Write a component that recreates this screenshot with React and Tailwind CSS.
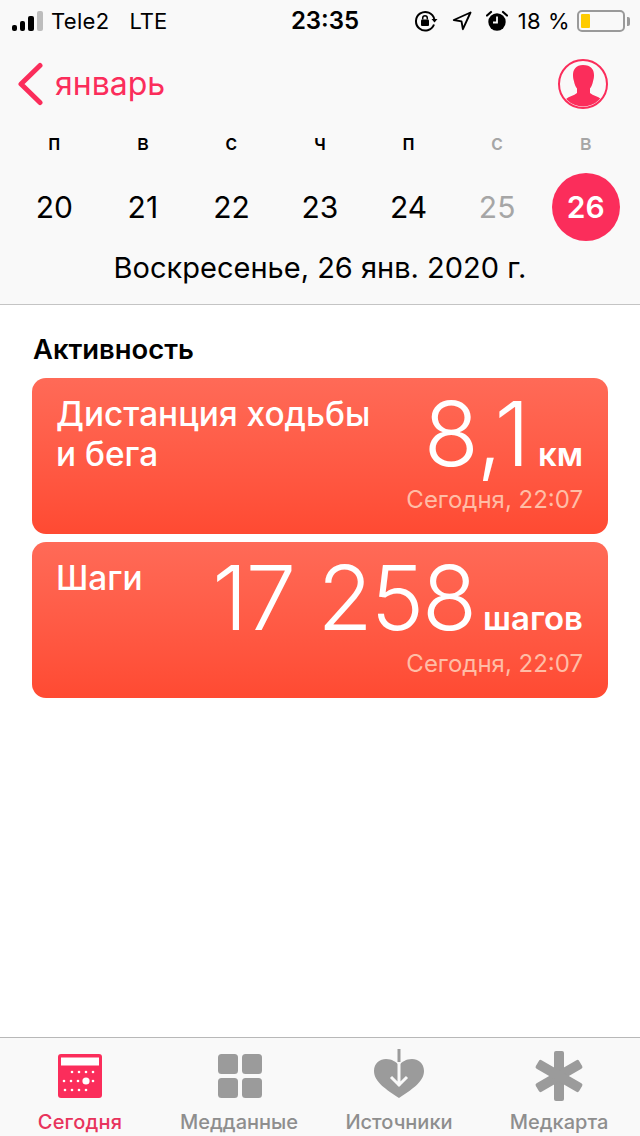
const days = [
  { name: "п", date: "20" },
  { name: "в", date: "21" },
  { name: "с", date: "22" },
  { name: "ч", date: "23" },
  { name: "п", date: "24" },
  { name: "с", date: "25", muted: true },
  { name: "в", date: "26", muted: true, today: true },
]

function StatusBar() {
  return (
    <div className="h-[40px] flex items-center justify-between pl-[12px] pr-[10px] pt-[2px] text-[22px] text-black">
      <div className="w-[230px] flex items-center">
        <div className="flex items-end gap-[3px] mr-[8px]">
          <span className="w-[5px] h-[6px] rounded-[2px] bg-black" />
          <span className="w-[5px] h-[10px] rounded-[2px] bg-black" />
          <span className="w-[6px] h-[15px] rounded-[2px] bg-black" />
          <span className="w-[6px] h-[20px] rounded-[2px] bg-[#bdbdbd]" />
        </div>
        <span className="tracking-[0.3px]">Tele2</span>
        <span className="ml-[20px]">LTE</span>
      </div>
      <div className="text-[24px] font-semibold">23:35</div>
      <div className="w-[222px] flex items-center justify-end">
        <svg width="24" height="22" viewBox="0 0 24 22" className="mr-[14px]">
          <path d="M20 14.500A9.300 9.300 0 1 1 20.300 9" fill="none" stroke="#000" strokeWidth="2" />
          <path d="M17.500 9h6l-3 3.400z" fill="#000" />
          <rect x="7" y="9.500" width="8" height="6.500" rx="1" fill="#000" />
          <path d="M8.700 9.500V8a2.300 2.300 0 0 1 4.600 0v1.500" fill="none" stroke="#000" strokeWidth="1.500" />
        </svg>
        <svg width="20" height="20" viewBox="0 0 20 20" className="mr-[14px]">
          <path d="M18.500 1.500 1.800 9l7.700 1.400 1.400 7.800z" fill="none" stroke="#000" strokeWidth="1.900" strokeLinejoin="round" />
        </svg>
        <svg width="22" height="22" viewBox="0 0 22 22" className="mr-[10px]">
          <circle cx="11" cy="12" r="8.700" fill="#000" />
          <path d="M11 6.500V12.500H7" fill="none" stroke="#fafafa" strokeWidth="1.800" />
          <path d="M1 5.500 5 2M21 5.500 17 2" stroke="#000" strokeWidth="2.200" strokeLinecap="round" />
        </svg>
        <span className="tracking-[0.5px]">18 %</span>
        <div className="ml-[7px] w-[48px] h-[22px] rounded-[5px] border-2 border-[#9a9a9a] p-[2px]">
          <div className="w-[9px] h-full rounded-[1px] bg-[#fecb00]" />
        </div>
        <span className="ml-[2px] w-[3px] h-[9px] rounded-r-[2px] bg-[#9a9a9a]" />
      </div>
    </div>
  )
}

function CalendarHeader() {
  return (
    <div className="bg-[#f9f9f9] border-b border-[#c4c4c4] h-[305px]">
      <StatusBar />
      <div className="h-[85px] flex items-center justify-between pl-[17px] pr-[31px] pt-[3px]">
        <div className="flex items-center text-[#fb2d5b]">
          <svg width="27" height="44" viewBox="0 0 27 44">
            <path d="M23 3.500 4 22l19 18.500" fill="none" stroke="#fb2d5b" strokeWidth="5" strokeLinecap="round" strokeLinejoin="round" />
          </svg>
          <span className="ml-[11px] text-[32px] leading-none">январь</span>
        </div>
        <svg width="52" height="52" viewBox="0 0 52 52">
          <defs>
            <clipPath id="avatar">
              <circle cx="26" cy="26" r="22.500" />
            </clipPath>
          </defs>
          <circle cx="26" cy="26" r="24" fill="none" stroke="#fb2d5b" strokeWidth="2" />
          <path
            clipPath="url(#avatar)"
            d="M26 7c8 0 11 4.500 11 10 0 2.500-.3 4-.9 6-.6 3-1.600 5.500-3.100 7.500V35c3 2.500 8 3.500 11 6l3 12H6l3-12c3-2.500 8-3.500 11-6v-4.500c-1.500-2-2.500-4.500-3.100-7.500-.6-2-.9-3.500-.9-6 0-5.500 3-10 10-10z"
            fill="#fb2d5b"
          />
        </svg>
      </div>
      <div className="grid grid-cols-7 px-[10px] pt-[3px]">
        {days.map((d, i) => (
          <div key={i} className="flex flex-col items-center">
            <span className={`h-[30px] leading-[30px] text-[21px] font-medium ${d.muted ? "text-[#a6a6a6]" : "text-black"}`}>{d.name}</span>
            <div
              className={`mt-[15px] w-[68px] h-[68px] rounded-full flex items-center justify-center text-[30px] ${
                d.today ? "bg-[#fb2d5b] text-white font-semibold" : d.muted ? "text-[#a6a6a6]" : "text-black"
              }`}
            >
              {d.date}
            </div>
          </div>
        ))}
      </div>
      <div className="mt-[10px] text-center text-[29px] leading-[34px] text-black">Воскресенье, 26 янв. 2020 г.</div>
    </div>
  )
}

function MetricCard({ title, value, unit, tight }) {
  return (
    <div className="h-[156px] rounded-[14px] bg-gradient-to-b from-[#ff6a57] to-[#ff4a32] pl-[24px] pr-[25px] flex flex-col text-white">
      <div className="flex justify-between">
        <div className="pt-[16px] text-[33.400px] leading-[40px] font-medium whitespace-nowrap">{title}</div>
        <div className="flex items-baseline h-[108px] pt-[8px]">
          <span className={`text-[90px] leading-[96px] font-light ${tight ? "tracking-[-2px]" : ""}`}>{value}</span>
          <span className="ml-[8px] text-[33px] leading-none font-semibold">{unit}</span>
        </div>
      </div>
      <div className="text-right text-[24px] leading-[28px] text-[#ffbda6]">Сегодня, 22:07</div>
    </div>
  )
}

function TabBar() {
  return (
    <div className="h-[99px] bg-[#f9f9f9] border-t border-[#b8b8b8] grid grid-cols-4 shrink-0">
      <div className="flex flex-col items-center">
        <svg width="46" height="46" viewBox="0 0 46 46" className="mt-[15px]">
          <rect x="1" y="1" width="44" height="44" rx="3" fill="#fb2d5b" />
          <rect x="4" y="4.500" width="38" height="8" fill="#fff" />
          {[15, 22, 29, 36].map((x) => <circle key={x} cx={x} cy={19} r="1.300" fill="#fff" />)}
          {[7, 14, 21, 36].map((x) => <circle key={x} cx={x} cy={28} r="1.300" fill="#fff" />)}
          <circle cx="29" cy="28" r="3.600" fill="#fff" />
          {[8, 15, 22, 29].map((x) => <circle key={x} cx={x} cy={37} r="1.300" fill="#fff" />)}
        </svg>
        <span className="mt-[10px] text-[20px] leading-[26px] font-medium tracking-[0.2px] text-[#e8335c]">Сегодня</span>
      </div>
      <div className="flex flex-col items-center">
        <svg width="46" height="46" viewBox="0 0 46 46" fill="#9b9b9b" className="mt-[15px]">
          <rect x="1" y="1" width="20" height="20" rx="3.500" />
          <rect x="25" y="1" width="20" height="20" rx="3.500" />
          <rect x="1" y="25" width="20" height="20" rx="3.500" />
          <rect x="25" y="25" width="20" height="20" rx="3.500" />
        </svg>
        <span className="mt-[10px] -ml-[2px] text-[20px] leading-[26px] font-medium text-[#8e8e8e]">Медданные</span>
      </div>
      <div className="flex flex-col items-center">
        <svg width="52" height="52" viewBox="0 0 52 52" className="mt-[10px] -ml-[2px]">
          <path d="M26 50C14 42 1 34 1 23 1 15 7 11 13 11c6 0 10 3 13 6 3-3 7-6 13-6 6 0 12 4 12 12 0 11-13 19-25 27z" fill="#9b9b9b" />
          <path d="M26 14v24M18 29l8 8 8-8" fill="none" stroke="#f9f9f9" strokeWidth="3" />
          <path d="M26 1v13" stroke="#9b9b9b" strokeWidth="3" />
        </svg>
        <span className="mt-[9px] -ml-[2px] text-[20px] leading-[26px] font-medium text-[#8e8e8e]">Источники</span>
      </div>
      <div className="flex flex-col items-center">
        <svg width="50" height="50" viewBox="0 0 50 50" fill="#9b9b9b" className="mt-[13px] -ml-[2px]">
          <rect x="20" y="0" width="10" height="50" rx="2" />
          <rect x="20" y="0" width="10" height="50" rx="2" transform="rotate(60 25 25)" />
          <rect x="20" y="0" width="10" height="50" rx="2" transform="rotate(120 25 25)" />
        </svg>
        <span className="mt-[8px] -ml-[2px] text-[20px] leading-[26px] font-medium text-[#8e8e8e]">Медкарта</span>
      </div>
    </div>
  )
}

export default function App() {
  return (
    <div className="w-[640px] h-[1136px] flex flex-col bg-white font-['Inter',sans-serif] overflow-hidden">
      <CalendarHeader />
      <div className="flex-1 px-[32px] pt-[27px]">
        <h2 className="text-[27.400px] leading-[34px] font-semibold text-black mb-[12px] ml-[1px]">Активность</h2>
        <div className="flex flex-col gap-[8px]">
          <MetricCard title={<>Дистанция ходьбы<br />и бега</>} value="8,1" unit="км" />
          <MetricCard title="Шаги" value="17 258" unit="шагов" tight />
        </div>
      </div>
      <TabBar />
    </div>
  )
}
